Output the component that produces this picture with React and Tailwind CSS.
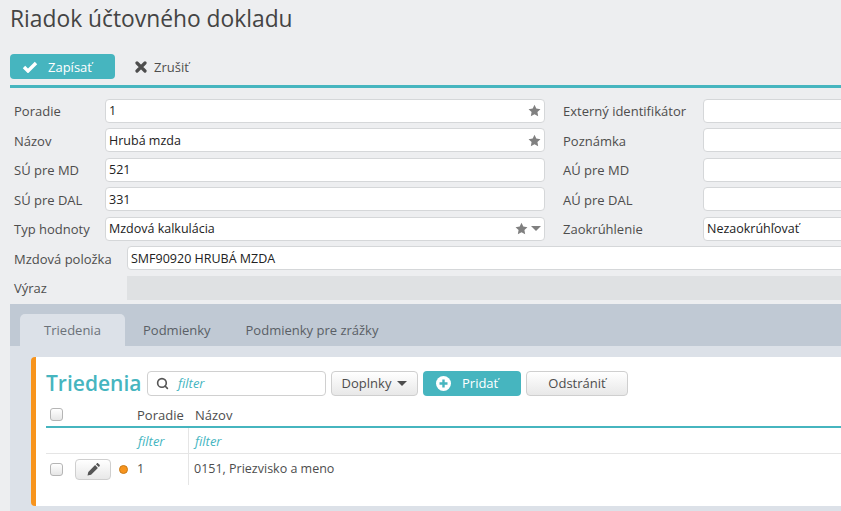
import { Search } from "lucide-react";

const font = { fontFamily: '"Open Sans", sans-serif' };

function StarIcon() {
  return (
    <svg width="13" height="13" viewBox="0 0 24 24" className="text-[#808080]">
      <path fill="currentColor" d="M12 1.5l3.3 7 7.7 1-5.6 5.3 1.4 7.7-6.8-3.7-6.8 3.7 1.4-7.7L1 9.500l7.700-1z" />
    </svg>
  );
}

function Caret({ color }) {
  return <span className={`w-0 h-0 border-l-[5px] border-r-[5px] border-t-[5px] border-l-transparent border-r-transparent ${color}`} />;
}

function Field({ value, star, caret, className = "" }) {
  return (
    <div className={`h-6 flex items-center bg-white border border-[#d5d7d9] rounded-[4px] pl-[3px] pr-[3px] text-[12.5px] leading-[18px] text-[#222] ${className}`}>
      <span className="flex-1 whitespace-nowrap pt-[1px]">{value}</span>
      {star && <StarIcon />}
      {caret && <span className="ml-[3px] flex"><Caret color="border-t-[#808080]" /></span>}
    </div>
  );
}

function Row({ left, lv, star, caret, right, rv }) {
  return (
    <div className="flex items-center h-[29.5px]">
      <div className="w-[91px] pt-[2px] text-[#4d4d4d]">{left}</div>
      <Field value={lv} star={star} caret={caret} className="w-[440px]" />
      <div className="ml-[18px] w-[140px] pt-[2px] text-[#4d4d4d]">{right}</div>
      <Field value={rv} className="w-[300px] shrink-0" />
    </div>
  );
}

function GrayButton({ children, className = "" }) {
  return (
    <div className={`h-[25px] flex items-center justify-center border border-[#cfcfcf] rounded-[4px] bg-gradient-to-b from-white to-[#e8e8e8] text-[#4d4d4d] ${className}`}>
      {children}
    </div>
  );
}

function CheckBox() {
  return <div className="w-[13px] h-[13px] rounded-[3px] border border-[#b5b5b5] bg-gradient-to-b from-white to-[#e6e6e6]" />;
}

export default function App() {
  return (
    <div style={font} className="w-[841px] h-[511px] overflow-hidden bg-[#edeef0] text-[13px] leading-none">
      <h1 className="pl-[10px] pt-[7px] h-[54px] text-[22.8px] leading-[24px] text-[#444]">Riadok účtovného dokladu</h1>

      <div className="ml-[10px] h-[34px] border-b-[3px] border-[#46b5bf] flex items-start">
        <div className="w-[105px] h-[25px] rounded-[4px] bg-[#46b5bf] text-white font-medium flex items-center pl-[12px]">
          <svg width="16" height="12" viewBox="0 0 16 12" className="mr-[10px]">
            <path d="M2 6l4 4 8-8" fill="none" stroke="white" strokeWidth="3.4" />
          </svg>
          <span className="pt-[2px]">Zapísať</span>
        </div>
        <div className="ml-[20px] h-[25px] flex items-center text-[#4d4d4d]">
          <svg width="12" height="12" viewBox="0 0 12 12" className="mr-[7px]">
            <path d="M2 2l8 8M10 2l-8 8" fill="none" stroke="#4d4d4d" strokeWidth="3.2" strokeLinecap="round" />
          </svg>
          <span className="pt-[2px]">Zrušiť</span>
        </div>
      </div>

      <div className="pl-[14px] pt-[8px] w-[1200px]">
        <Row left="Poradie" lv="1" star right="Externý identifikátor" />
        <Row left="Názov" lv="Hrubá mzda" star right="Poznámka" />
        <Row left="SÚ pre MD" lv="521" right="AÚ pre MD" />
        <Row left="SÚ pre DAL" lv="331" right="AÚ pre DAL" />
        <Row left="Typ hodnoty" lv="Mzdová kalkulácia" star caret right="Zaokrúhlenie" rv="Nezaokrúhľovať" />
        <div className="flex items-center h-[29.5px]">
          <div className="w-[113px] pt-[2px] text-[#4d4d4d]">Mzdová položka</div>
          <Field value="SMF90920 HRUBÁ MZDA" className="w-[800px]" />
        </div>
        <div className="flex items-center h-[29.5px]">
          <div className="w-[113px] pt-[2px] text-[#4d4d4d]">Výraz</div>
          <div className="w-[800px] h-6 bg-[#dfe1e3]" />
        </div>
      </div>

      <div className="ml-[10px] mt-[1.5px] bg-[#c0c9d4] pt-[10px] h-[210px]">
        <div className="flex pl-[10px] h-[32px] text-[#5a5f66]">
          <div className="w-[105px] bg-[#dce1e8] rounded-t-[5px] flex items-center justify-center text-[#6b7178]">Triedenia</div>
          <div className="ml-[18px] flex items-center font-medium">Podmienky</div>
          <div className="ml-[35px] flex items-center font-medium">Podmienky pre zrážky</div>
        </div>
        <div className="bg-[#dce1e8] pl-[21px] pt-[11px] h-[170px]">
          <div className="bg-white border-l-[5px] border-[#f7941d] rounded-l-[4px] h-[149px] pl-[10px]">
            <div className="flex items-center pt-[14px]">
              <div className="w-[96px] text-[21px] leading-[25px] font-semibold text-[#46b5bf]">Triedenia</div>
              <div className="ml-[5px] w-[179px] h-[25px] border border-[#d0d0d0] rounded-[4px] flex items-center pl-[8px] text-[#46b5bf] italic">
                <Search size={13} strokeWidth={3} className="text-[#555] mr-[9px]" />
                filter
              </div>
              <GrayButton className="ml-[5px] w-[87px]">
                Doplnky
                <span className="ml-[6px] flex"><Caret color="border-t-[#4d4d4d]" /></span>
              </GrayButton>
              <div className="ml-[5px] w-[98px] h-[25px] rounded-[4px] bg-[#46b5bf] text-white font-medium flex items-center pl-[13px]">
                <svg width="15" height="15" viewBox="0 0 15 15" className="mr-[11px]">
                  <circle cx="7.500" cy="7.500" r="7.500" fill="white" />
                  <path d="M7.500 3.500v8M3.500 7.500h8" stroke="#46b5bf" strokeWidth="2.400" />
                </svg>
                Pridať
              </div>
              <GrayButton className="ml-[5px] w-[102px]">Odstrániť</GrayButton>
            </div>

            <div className="flex items-center h-[26px] border-b-[2px] border-[#46b5bf] mt-[6px] text-[#4d4d4d]">
              <div className="w-[91px] pl-[4px]"><CheckBox /></div>
              <div className="w-[58px] pt-[2px]">Poradie</div>
              <div className="pt-[2px]">Názov</div>
            </div>
            <div className="flex items-center h-[26px] border-b border-[#e5e5e5] text-[#46b5bf] italic">
              <div className="w-[91px]" />
              <div className="w-[52px] h-full flex items-center border-r border-[#e5e5e5] pt-[2px] pl-[1px]">filter</div>
              <div className="pl-[6px] pt-[2px]">filter</div>
            </div>
            <div className="flex items-center h-[31px] text-[#4d4d4d] text-[12.5px]">
              <div className="w-[29px] pl-[4px]"><CheckBox /></div>
              <GrayButton className="w-[36px] !h-[21px]">
                <svg width="13" height="13" viewBox="0 0 13 13">
                  <path fill="#555" d="M0.500 12.500l0.800-3.600 6.800-6.800 2.800 2.800-6.800 6.800zM8.900 1.300l0.900-0.900c0.400-0.400 1-0.400 1.400 0l1.400 1.400c0.400 0.400 0.400 1 0 1.400l-0.900 0.900z" />
                </svg>
              </GrayButton>
              <div className="ml-[8px] w-[9px] h-[9px] rounded-full bg-[#f7941d] border border-[#c97a18]" />
              <div className="ml-[9px] w-[52px] h-full flex items-center border-r border-[#e5e5e5]">1</div>
              <div className="pl-[5px]">0151, Priezvisko a meno</div>
            </div>
          </div>
        </div>
      </div>
    </div>
  );
}
